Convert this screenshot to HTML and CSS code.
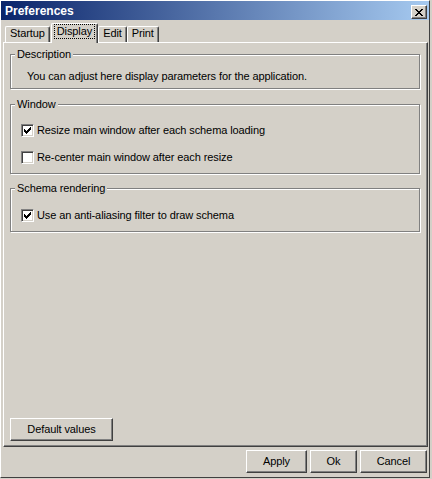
FILE: index.html
```
<!DOCTYPE html>
<html>
<head>
<meta charset="utf-8">
<title>Preferences</title>
<link rel="stylesheet" href="styles.css">
</head>
<body>
<div class="window">
  <div class="titlebar">
    <span class="title">Preferences</span>
    <span class="close-btn"><svg width="8" height="7" viewBox="0 0 8 7"><path d="M0 0h2v1H0z M6 0h2v1H6z M1 1h2v1H1z M5 1h2v1H5z M2 2h4v1H2z M3 3h2v1H3z M2 4h4v1H2z M1 5h2v1H1z M5 5h2v1H5z M0 6h2v1H0z M6 6h2v1H6z" fill="#000"/></svg></span>
  </div>
  <div class="content">
    <div class="tabs">
      <div class="tab">Startup</div>
      <div class="tab selected"><span class="focus">Display</span></div>
      <div class="tab">Edit</div>
      <div class="tab">Print</div>
    </div>
    <div class="panel">
      <fieldset class="group group-desc">
        <legend>Description</legend>
        <p class="desc">You can adjust here display parameters for the application.</p>
      </fieldset>
      <fieldset class="group group-window">
        <legend>Window</legend>
        <div class="options">
          <label class="option"><span class="check"><svg width="7" height="7" viewBox="0 0 7 7"><path d="M6 0h1v1h-1z M5 1h2v1h-2z M0 2h1v1h-1z M4 2h3v1h-3z M0 3h2v1h-2z M3 3h3v1h-3z M0 4h5v1h-5z M1 5h3v1h-3z M2 6h1v1h-1z" fill="#000"/></svg></span>Resize main window after each schema loading</label>
          <label class="option"><span class="check"></span>Re-center main window after each resize</label>
        </div>
      </fieldset>
      <fieldset class="group group-schema">
        <legend>Schema rendering</legend>
        <div class="options">
          <label class="option"><span class="check"><svg width="7" height="7" viewBox="0 0 7 7"><path d="M6 0h1v1h-1z M5 1h2v1h-2z M0 2h1v1h-1z M4 2h3v1h-3z M0 3h2v1h-2z M3 3h3v1h-3z M0 4h5v1h-5z M1 5h3v1h-3z M2 6h1v1h-1z" fill="#000"/></svg></span>Use an anti-aliasing filter to draw schema</label>
        </div>
      </fieldset>
      <div class="spacer"></div>
      <button class="btn btn-defaults">Default values</button>
    </div>
    <div class="actions">
      <button class="btn btn-apply">Apply</button>
      <button class="btn btn-ok">Ok</button>
      <button class="btn btn-cancel">Cancel</button>
    </div>
  </div>
</div>
</body>
</html>
```
FILE: styles.css
```
* { box-sizing: border-box; }

body {
  margin: 0;
  background: #d4d0c8;
  font-family: "Liberation Sans", Arial, sans-serif;
  font-size: 11px;
  letter-spacing: -0.1px;
  color: #000;
}

.window {
  width: 430px;
  height: 478px;
  border-left: 1px solid #fff;
  border-top: 1px solid #fff;
  border-right: 1px solid #404040;
  border-bottom: 1px solid #404040;
  background: #d4d0c8;
  display: flex;
  flex-direction: column;
}

.titlebar {
  flex: 0 0 19px;
  height: 19px;
  display: flex;
  align-items: flex-start;
  justify-content: space-between;
  padding: 0 2px 0 4px;
  background: linear-gradient(to right, #0a246a, #a6caf0);
}

.title {
  color: #fff;
  font-weight: bold;
  font-size: 12px;
  letter-spacing: 0;
  line-height: 17px;
  margin-top: 2px;
}

.close-btn {
  width: 16px;
  height: 14px;
  margin-top: 4px;
  display: flex;
  align-items: center;
  justify-content: center;
  background: #d4d0c8;
  border: 1px solid;
  border-color: #fff #404040 #404040 #fff;
  box-shadow: inset -1px -1px 0 #808080;
}

.close-btn svg { display: block; }

.content {
  flex: 1;
  display: flex;
  flex-direction: column;
  padding: 0 1px 4px 2px;
}

.tabs {
  flex: 0 0 22px;
  height: 22px;
  display: flex;
  align-items: flex-end;
  padding-left: 2px;
}

.tab {
  height: 16px;
  padding: 0 4px;
  line-height: 13px;
  border-top: 1px solid #fff;
  border-left: 1px solid #fff;
  border-right: 1px solid #404040;
  box-shadow: inset -1px 0 0 #808080;
  border-radius: 2px 2px 0 0;
  background: #d4d0c8;
}

.tab.selected {
  height: 20px;
  padding: 0 2px;
  margin: 0 0 -1px 1px;
  position: relative;
  z-index: 1;
}

.focus {
  display: inline-block;
  padding: 1px 3px;
  line-height: 13px;
  outline: 1px dotted #000;
  outline-offset: -1px;
}

.panel {
  flex: 0 0 405px;
  height: 405px;
  border: 1px solid;
  border-color: #fff #404040 #404040 #fff;
  box-shadow: inset -1px -1px 0 #808080;
  padding: 5px 7px 5px 6px;
  display: flex;
  flex-direction: column;
}

.group {
  margin: 0;
  min-width: 0;
  border: 1px solid #808080;
  box-shadow: inset 1px 1px 0 #fff, 1px 1px 0 #fff;
}

.group legend {
  padding: 0 2px;
  line-height: 13px;
  background: #d4d0c8;
}

.group-desc { padding: 9px 4px 5px 4px; }

.desc {
  margin: 0 0 0 12px;
  line-height: 13px;
}

.group-window {
  margin-top: 9px;
  padding: 13px 4px 9px 4px;
}

.group-schema {
  margin-top: 8px;
  padding: 14px 4px 9px 4px;
}

.options {
  display: flex;
  flex-direction: column;
  gap: 14px;
  padding-left: 6px;
}

.option {
  display: flex;
  align-items: center;
  gap: 3px;
  height: 13px;
  line-height: 13px;
}

.check {
  flex: none;
  width: 13px;
  height: 13px;
  padding: 2px 0 0 2px;
  background: #fff;
  border: 1px solid;
  border-color: #808080 #fff #fff #808080;
  box-shadow: inset 1px 1px 0 #404040, inset -1px -1px 0 #d4d0c8;
  display: flex;
  align-items: flex-start;
}

.check svg { display: block; }

.spacer { flex: 1; }

.btn {
  font: inherit;
  letter-spacing: inherit;
  color: #000;
  height: 23px;
  padding: 0;
  line-height: 13px;
  background: #d4d0c8;
  border: 1px solid;
  border-color: #fff #404040 #404040 #fff;
  box-shadow: inset -1px -1px 0 #808080;
}

.btn-defaults {
  width: 103px;
  align-self: flex-start;
}

.actions {
  display: flex;
  justify-content: flex-end;
  gap: 3px;
  margin-top: 3px;
  padding-right: 1px;
}

.btn-apply { width: 61px; }
.btn-ok { width: 47px; }
.btn-cancel { width: 67px; }
```
